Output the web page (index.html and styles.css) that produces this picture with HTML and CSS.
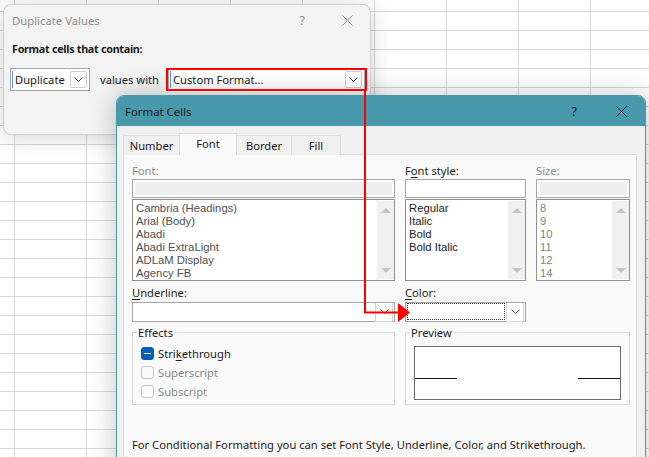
FILE: index.html
```html
<!DOCTYPE html>
<html lang="en">
<head>
  <meta charset="UTF-8" />
  <meta name="viewport" content="width=device-width, initial-scale=1.0" />
  <title>Duplicate Values</title>
  <link rel="stylesheet" href="styles.css">
</head>
<body>
  <!-- back dialog -->
  <div class="dialog dup">
    <div class="dup-title">
      <span>Duplicate Values</span>
      <span class="help">?</span>
      <svg class="close" width="11" height="11" viewBox="0 0 11 11"><path d="M0.5 0.5 L10.5 10.5 M10.5 0.5 L0.5 10.5" /></svg>
    </div>
    <div class="dup-body">
      <p class="heading">Format cells that contain:</p>
      <div class="dup-row">
        <div class="combo combo-type">
          <span class="caret">Duplicate</span>
          <span class="drop"><svg width="9" height="6" viewBox="0 0 9 6"><path d="M0.5 0.5 L4.5 4.5 L8.5 0.5" /></svg></span>
        </div>
        <span class="with">values with</span>
        <div class="combo combo-format">
          <span class="caret">Custom Format...</span>
          <span class="drop"><svg width="9" height="6" viewBox="0 0 9 6"><path d="M0.5 0.5 L4.5 4.5 L8.5 0.5" /></svg></span>
        </div>
      </div>
    </div>
  </div>

  <!-- front dialog -->
  <div class="dialog fc">
    <div class="fc-title">
      <span>Format Cells</span>
      <span class="help">?</span>
      <svg class="close" width="11" height="11" viewBox="0 0 11 11"><path d="M0.5 0.5 L10.5 10.5 M10.5 0.5 L0.5 10.5" /></svg>
    </div>
    <div class="fc-body">
      <div class="tabs">
        <div class="tab t-number">Number</div>
        <div class="tab t-font active">Font</div>
        <div class="tab t-border">Border</div>
        <div class="tab t-fill">Fill</div>
      </div>
      <div class="panel">
        <div class="grid">
          <label class="lbl off">Font:</label>
          <label class="lbl">F<u>o</u>nt style:</label>
          <label class="lbl off">Size:</label>

          <div class="field off"><span></span></div>
          <div class="field"></div>
          <div class="field off"><span></span></div>

          <div class="list font-list">
            <div class="items">
              <div>Cambria (Headings)</div>
              <div>Arial (Body)</div>
              <div>Abadi</div>
              <div>Abadi ExtraLight</div>
              <div>ADLaM Display</div>
              <div>Agency FB</div>
            </div>
            <div class="sb"><i class="up"></i><i class="down"></i></div>
          </div>
          <div class="list style-list">
            <div class="items">
              <div>Regular</div>
              <div>Italic</div>
              <div>Bold</div>
              <div>Bold Italic</div>
            </div>
            <div class="sb"><i class="up"></i><i class="down"></i></div>
          </div>
          <div class="list size-list">
            <div class="items">
              <div>8</div>
              <div>9</div>
              <div>10</div>
              <div>11</div>
              <div>12</div>
              <div>14</div>
            </div>
            <div class="sb"><i class="up"></i><i class="down"></i></div>
          </div>

          <label class="lbl lbl-gap"><u>U</u>nderline:</label>
          <label class="lbl lbl-gap"><u>C</u>olor:</label>
          <span></span>

          <div class="select">
            <span class="value"></span>
            <span class="drop"><svg width="9" height="6" viewBox="0 0 9 6"><path d="M0.5 0.5 L4.5 4.5 L8.5 0.5" /></svg></span>
          </div>
          <div class="select color">
            <span class="value focus"></span>
            <span class="drop"><svg width="9" height="6" viewBox="0 0 9 6"><path d="M0.5 0.5 L4.5 4.5 L8.5 0.5" /></svg></span>
          </div>
          <span></span>

          <fieldset class="group effects">
            <legend>Effects</legend>
            <div class="check"><span class="box on"></span>Stri<u>k</u>ethrough</div>
            <div class="check off"><span class="box"></span>Superscript</div>
            <div class="check off"><span class="box"></span>Subscript</div>
          </fieldset>
          <fieldset class="group preview">
            <legend>Preview</legend>
            <div class="sample"><span></span><span></span></div>
          </fieldset>

          <p class="note">For Conditional Formatting you can set Font Style, Underline, Color, and Strikethrough.</p>
        </div>
      </div>
    </div>
  </div>

  <!-- callout drawn over both dialogs -->
  <svg class="callout" width="649" height="457" viewBox="0 0 649 457">
    <rect x="167" y="69" width="199" height="21" />
    <path d="M365 90 V312.5 H399" />
    <polygon points="398,303 410,312.5 398,322" />
  </svg>
</body>
</html>
```

FILE: styles.css
```css
* {
  box-sizing: border-box;
}
body {
  margin: 0;
  width: 649px;
  height: 457px;
  overflow: hidden;
  position: relative;
  font-family: "Noto Sans", sans-serif;
  font-size: 11.2px;
  color: #1b1b1b;
  background-color: #fff;
  background-image:
    linear-gradient(to right, #d6d6d6 1px, transparent 1px),
    linear-gradient(to bottom, #d6d6d6 1px, transparent 1px);
  background-size: 72px 19px;
  background-position: 14px 11px;
}
p {
  margin: 0;
}
u {
  text-decoration-thickness: 1px;
  text-underline-offset: 2px;
}

.dialog {
  position: absolute;
}

/* Duplicate Values */
.dup {
  left: 3px;
  top: 4px;
  width: 368px;
  height: 131px;
  background: #f3f3f3;
  border: 1px solid #cfcfcf;
  border-radius: 8px;
  box-shadow: 0 2px 22px rgba(0,0,0,0.18);
}
.dup-title {
  display: flex;
  align-items: center;
  height: 30px;
  padding: 0 17px 0 8px;
  color: #8e8e8e;
  font-size: 11.3px;
}
.help {
  margin-left: auto;
  margin-right: 37px;
  font-size: 12.5px;
}
.close path {
  stroke: currentColor;
  stroke-width: 1;
  fill: none;
}
.dup-body {
  padding: 6px 0 0 6px;
}
.heading {
  font-weight: bold;
  font-size: 10.8px;
  line-height: 16px;
  padding-left: 2px;
  letter-spacing: -0.3px;
}
.dup-row {
  display: flex;
  align-items: center;
  width: 355px;
  margin-top: 11px;
}
.combo {
  display: flex;
  align-items: center;
  flex-shrink: 0;
  height: 23px;
  background: #fff;
  border: 1px solid #a8a8a8;
  padding: 0 2px 0 1px;
}
.caret {
  flex: 1;
  border-left: 1px solid #5b9bd5;
  padding-left: 2px;
  line-height: 17px;
  white-space: nowrap;
  overflow: hidden;
}
.combo-type {
  width: 80px;
}
.combo-format {
  width: 197px;
  margin-left: auto;
}
.with {
  margin-left: 10px;
  white-space: nowrap;
}
.drop {
  display: flex;
  align-items: center;
  justify-content: center;
  flex-shrink: 0;
  width: 17px;
  height: 17px;
  border: 1px solid #cdcdcd;
  border-radius: 2px;
  background: #fff;
}
.drop path {
  fill: none;
  stroke: #555;
  stroke-width: 1;
}

/* Format Cells */
.fc {
  left: 116px;
  top: 95px;
  width: 530px;
  height: 380px;
  background: #f0f0f0;
  border: 1px solid #4799ab;
  border-radius: 8px 8px 0 0;
  box-shadow: 0 0 26px rgba(0,0,0,0.24);
}
.fc-title {
  display: flex;
  align-items: center;
  height: 30px;
  padding: 0 18px 0 8px;
  background: #4799ab;
  border-radius: 7px 7px 0 0;
  color: #1a1a1a;
  font-size: 11.4px;
}
.fc-title .help {
  margin-right: 39px;
}
.fc-body {
  padding: 7px 8px 0 6px;
}
.tabs {
  display: flex;
  align-items: flex-end;
  height: 22px;
  margin-bottom: -1px;
  position: relative;
  z-index: 1;
}
.tab {
  height: 20px;
  line-height: 20px;
  text-align: center;
  border: 1px solid #dcdcdc;
  border-bottom: none;
  background: #f0f0f0;
}
.tab.active {
  height: 22px;
  background: #f9f9f9;
}
.t-number { width: 56px; border-right: none; }
.t-font { width: 58px; }
.t-border { width: 55px; border-left: none; }
.t-fill { width: 49px; border-left: none; }

.panel {
  height: 320px;
  background: #f9f9f9;
  border: 1px solid #dcdcdc;
  padding: 8px 6px 0 8px;
}
.grid {
  display: grid;
  grid-template-columns: 263px 121px 94px;
  column-gap: 10px;
  align-items: start;
}
.lbl {
  line-height: 15px;
  height: 15px;
}
.lbl.off {
  color: #8a8a8a;
}
.lbl-gap {
  margin-top: 4px;
}
.field {
  margin-top: 1px;
  height: 19px;
  background: #fff;
  border: 1px solid #a5a5a5;
  padding: 2px;
}
.field span {
  display: block;
  height: 100%;
  background: #efefef;
}
.list {
  display: flex;
  margin-top: 1px;
  height: 82px;
  background: #fff;
  border: 1px solid #8f8f8f;
  overflow: hidden;
}
/* tight 13px rows, so a font with a short em box */
.items {
  flex: 1;
  padding: 2px 3px 0;
  font-family: "Liberation Sans", Arial, sans-serif;
  font-size: 11.3px;
  line-height: 13px;
  white-space: nowrap;
}
.font-list .items {
  color: #4f4f55;
}
.size-list .items {
  color: #8a8079;
}
.sb {
  width: 17px;
  margin: 1px 0;
  background: #f0f0f0;
  display: flex;
  flex-direction: column;
  justify-content: space-between;
  align-items: center;
  padding: 7px 0 6px;
}
.sb i {
  width: 0;
  height: 0;
  border-left: 5px solid transparent;
  border-right: 5px solid transparent;
}
.sb .up {
  border-bottom: 5px solid #c3c3c3;
}
.sb .down {
  border-top: 5px solid #c3c3c3;
}
.select {
  display: flex;
  margin-top: 2px;
  height: 20px;
  background: #fff;
  border: 1px solid #a5a5a5;
  padding: 0 1px 1px 1px;
}
.select .value {
  flex: 1;
}
.select .drop {
  width: 18px;
  height: 19px;
  border-radius: 0;
  border-color: #d5d5d5;
  border-top: none;
}
.value.focus {
  border: 1px dotted #333;
  margin: 0 1px 0 0;
}
.group {
  margin: 3px 0 0;
  padding: 0;
  height: 80px;
  border: 1px solid #dcdcdc;
  min-width: 0;
}
.group legend {
  margin-left: 4px;
  padding: 0 1px;
  line-height: 15px;
}
.preview {
  grid-column: 2 / 4;
}
.check {
  display: flex;
  align-items: center;
  height: 19px;
  padding-left: 8px;
}
.effects .check:first-of-type {
  margin-top: 4px;
}
.check.off {
  color: #8a8a8a;
}
.box {
  width: 13px;
  height: 13px;
  margin-right: 4px;
  border: 1px solid #c6c6c6;
  border-radius: 3px;
  background: #fafafa;
  position: relative;
}
.box.on {
  background: #005fb8;
  border-color: #005fb8;
}
.box.on::after {
  content: "";
  position: absolute;
  left: 2px;
  right: 2px;
  top: 5px;
  height: 1px;
  background: #fff;
}
.sample {
  display: flex;
  justify-content: space-between;
  height: 54px;
  margin: 6px 8px 0 8px;
  background: #fff;
  border: 1px solid #6e6e6e;
  padding-top: 31px;
}
.sample span {
  width: 42px;
  height: 1px;
  background: #111;
}
.note {
  grid-column: 1 / 4;
  margin-top: 32px;
  line-height: 15px;
  white-space: nowrap;
}

/* red callout */
.callout {
  position: absolute;
  left: 0;
  top: 0;
  pointer-events: none;
}
.callout rect,
.callout path {
  fill: none;
  stroke: #f00;
  stroke-width: 2;
}
.callout polygon {
  fill: #f00;
}
```
